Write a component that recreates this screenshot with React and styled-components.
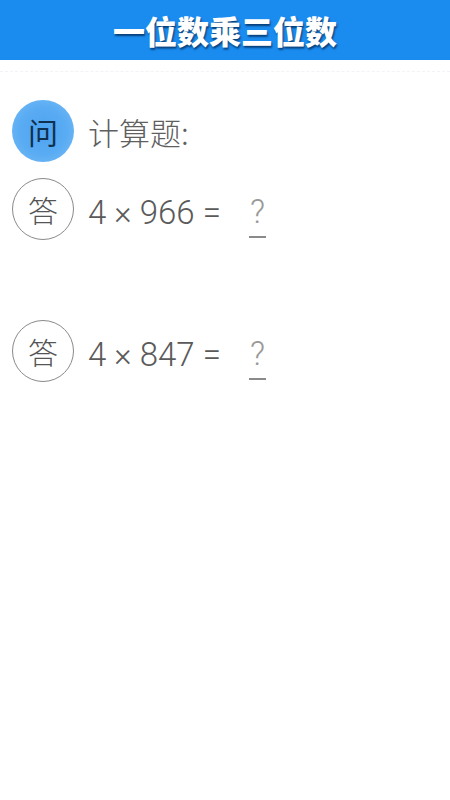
import React from "react";
import styled, { createGlobalStyle } from "styled-components";

const GlobalStyle = createGlobalStyle`
  html, body {
    margin: 0;
    padding: 0;
    background: #ffffff;
  }
  body {
    font-family: Roboto, "Noto Sans CJK SC", sans-serif;
  }
`;

const problems = [
  { a: 4, b: 966 },
  { a: 4, b: 847 },
];

const App = () => {
  return (
    <Page>
      <GlobalStyle />
      <Header>
        <Title>一位数乘三位数</Title>
      </Header>
      <Divider />
      <Content>
        <Row>
          <QuestionBadge>问</QuestionBadge>
          <Prompt>计算题:</Prompt>
        </Row>
        {problems.map((p) => (
          <AnswerBlock key={p.b}>
            <Row>
              <AnswerBadge>答</AnswerBadge>
              <Equation>
                {p.a} × {p.b} =
              </Equation>
              <Blank>?</Blank>
            </Row>
          </AnswerBlock>
        ))}
      </Content>
    </Page>
  );
};

export default App;

const Page = styled.div`
  width: 450px;
  min-height: 800px;
  background: #ffffff;
`;

const Header = styled.header`
  height: 60px;
  background: #1a8cf0;
  display: flex;
  align-items: center;
  justify-content: center;
`;

const Title = styled.h1`
  margin: 0;
  color: #ffffff;
  font-family: "Noto Sans CJK SC", sans-serif;
  font-size: 32px;
  font-weight: 900;
  letter-spacing: 0;
  text-shadow: 1px 2px 2px rgba(0, 30, 70, 0.7);
`;

const Divider = styled.div`
  margin: 11px 0 0;
  border-top: 1px dashed #f1f3f6;
`;

const Content = styled.main`
  display: flex;
  flex-direction: column;
  padding: 28px 0 0 12px;
  gap: 16px;
`;

const Row = styled.div`
  display: flex;
  align-items: center;
  height: 62px;
`;

const AnswerBlock = styled.section`
  & + & {
    margin-top: 64px;
  }
`;

const Badge = styled.div`
  width: 62px;
  height: 62px;
  border-radius: 50%;
  box-sizing: border-box;
  display: flex;
  align-items: center;
  justify-content: center;
  flex-shrink: 0;
  font-family: "Noto Sans CJK SC", sans-serif;
  font-size: 30px;
  font-weight: 300;
  margin-right: 14px;
`;

const QuestionBadge = styled(Badge)`
  background: radial-gradient(circle at 50% 50%, #4da3f0 0%, #5aacf3 55%, #7cc0f8 100%);
  color: #10304f;
  font-weight: 400;
`;

const AnswerBadge = styled(Badge)`
  border: 1px solid #8a8a8a;
  color: #555555;
`;

const Prompt = styled.span`
  font-family: "Noto Sans CJK SC", sans-serif;
  font-size: 31px;
  font-weight: 300;
  color: #5f5f5f;
`;

const Equation = styled.span`
  font-family: Roboto, sans-serif;
  font-size: 33px;
  font-weight: 300;
  color: #5a5a5a;
  margin-top: 6px;
`;

const Blank = styled.span`
  font-family: Roboto, sans-serif;
  font-size: 33px;
  font-weight: 300;
  color: #999999;
  margin-left: 28px;
  margin-top: 14px;
  padding: 0 1px 6px;
  line-height: 1.1;
  border-bottom: 2px solid #8a8a8a;
`;
